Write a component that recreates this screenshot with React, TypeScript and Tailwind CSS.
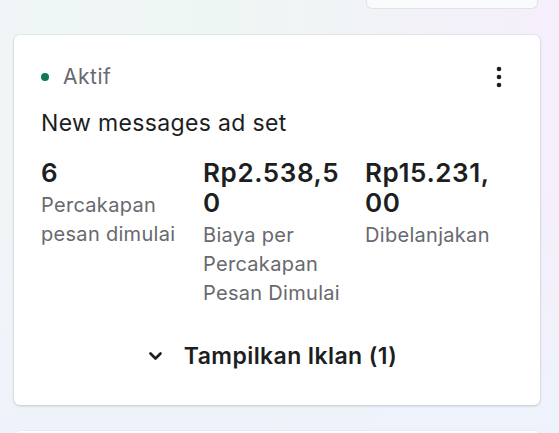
export default function App() {
  return (
    <div
      className="h-[433px] w-full overflow-hidden bg-[linear-gradient(to_bottom,rgba(238,243,251,0)_45%,#eef3fb),linear-gradient(to_right,#f0f6f7,#eef6f3_40%,#f5effb)] font-['Inter',sans-serif]"
    >
      {/* top box cut off by the viewport */}
      <div className="ml-[366px] h-[9px] w-[172px] rounded-b-md border border-t-0 border-[#e1e3e8] bg-[#fafbfc]" />

      {/* Ad set card */}
      <div className="ml-[14px] mt-[26px] w-[526px] rounded-md bg-white pl-[27px] pr-[30px] pt-[30px] pb-[37px] shadow-[0_1px_3px_rgba(0,0,0,0.16),0_0_0_1px_rgba(0,0,0,0.03)]">
        <div className="flex items-center justify-between">
          <div className="flex items-center gap-[14px]">
            <span className="h-[8px] w-[8px] rounded-full bg-[#0e7a55]" />
            <span className="text-[21px] leading-[24px] tracking-[0.5px] text-[#67696e]">Aktif</span>
          </div>
          <svg width="24" height="24" viewBox="0 0 24 24" className="mr-[-1px]">
            <circle cx="12" cy="4" r="2.3" fill="#1c1e21" />
            <circle cx="12" cy="12" r="2.3" fill="#1c1e21" />
            <circle cx="12" cy="20" r="2.3" fill="#1c1e21" />
          </svg>
        </div>

        <div className="mt-[20px] text-[23px] leading-[28px] tracking-[0.35px] text-[#1c1e21]">New messages ad set</div>

        <div className="mt-[21px] grid grid-cols-[162px_162px_1fr]">
          <div>
            <div className="text-[26px] font-semibold leading-[30px] tracking-[0.6px] text-[#1c1e21]">6</div>
            <div className="mt-[3px] text-[20px] leading-[29px] tracking-[0.3px] text-[#67696e]">
              Percakapan
              <br />
              pesan dimulai
            </div>
          </div>
          <div>
            <div className="text-[26px] font-semibold leading-[30px] tracking-[0.6px] text-[#1c1e21]">
              Rp2.538,5
              <br />0
            </div>
            <div className="mt-[3px] text-[20px] leading-[29px] tracking-[0.3px] text-[#67696e]">
              Biaya per
              <br />
              Percakapan
              <br />
              Pesan Dimulai
            </div>
          </div>
          <div>
            <div className="text-[26px] font-semibold leading-[30px] tracking-[0.6px] text-[#1c1e21]">
              Rp15.231,
              <br />
              00
            </div>
            <div className="mt-[3px] text-[20px] leading-[29px] tracking-[0.3px] text-[#67696e]">Dibelanjakan</div>
          </div>
        </div>

        <div className="mt-[36px] flex items-center justify-center gap-[22px] pr-[5px]">
          <svg width="13" height="9" viewBox="0 0 13 9">
            <path d="M1.5 1.5 L6.5 6.5 L11.5 1.5" fill="none" stroke="#1c1e21" strokeWidth="2.6" strokeLinecap="round" strokeLinejoin="round" />
          </svg>
          <span className="text-[23px] font-semibold leading-[24px] tracking-[0.4px] text-[#1c1e21]">Tampilkan Iklan (1)</span>
        </div>
      </div>

      {/* next card peeking in */}
      <div className="ml-[14px] mt-[26px] h-[30px] w-[526px] rounded-md bg-white shadow-[0_0_0_1px_rgba(0,0,0,0.03)]" />
    </div>
  );
}
